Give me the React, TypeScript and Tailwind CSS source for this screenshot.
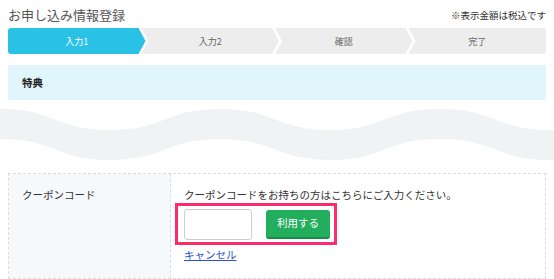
import React from "react";

const STEPS = ["入力1", "入力2", "確認", "完了"];

const clipFor = (i: number, n: number) => {
  if (i === 0) return "[clip-path:polygon(0_0,calc(100%-7px)_0,100%_50%,calc(100%-7px)_100%,0_100%)]";
  if (i === n - 1) return "[clip-path:polygon(0_0,100%_0,100%_100%,0_100%,7px_50%)]";
  return "[clip-path:polygon(0_0,calc(100%-7px)_0,100%_50%,calc(100%-7px)_100%,0_100%,7px_50%)]";
};

function StepBar() {
  return (
    <div className="flex h-[26px] w-full">
      {STEPS.map((s, i) => (
        <div
          key={s}
          className={[
            "flex flex-1 items-center justify-center text-[9px] leading-none",
            i === 0 ? "rounded-l-[3px] bg-[#29c1e6] text-white" : "ml-[-4px] bg-[#ededed] text-[#666]",
            i === STEPS.length - 1 ? "rounded-r-[3px]" : "",
            clipFor(i, STEPS.length),
          ].join(" ")}
        >
          {s}
        </div>
      ))}
    </div>
  );
}

function Wave() {
  return (
    <div className="mt-[9px] h-[52px] w-full overflow-hidden">
      <svg width="660" height="52" viewBox="0 0 660 52" className="block">
        <path
          fill="#f0f3f4"
          d="M0,0 C55,0 55,21 110,21 C165,21 165,0 220,0 C275,0 275,21 330,21 C385,21 385,0 440,0 C495,0 495,21 550,21 C605,21 605,0 660,0 L660,30 C605,30 605,51 550,51 C495,51 495,30 440,30 C385,30 385,51 330,51 C275,51 275,30 220,30 C165,30 165,51 110,51 C55,51 55,30 0,30 Z"
        />
      </svg>
    </div>
  );
}

export default function App() {
  return (
    <div className="w-[554px] bg-white font-['Noto_Sans_CJK_JP',sans-serif] text-[#333]">
      <div className="px-2">
        <div className="flex h-[28px] items-center justify-between pt-[2px]">
          <h1 className="text-[13px] leading-[18px] text-[#555]">お申し込み情報登録</h1>
          <p className="text-[9.5px] leading-[12px] text-[#333]">※表示金額は税込です</p>
        </div>
        <StepBar />
        <div className="mt-[11px] flex h-[35px] items-center bg-[#e1f5fc] px-[14px]">
          <h2 className="text-[10.5px] font-bold leading-[14px] text-[#222]">特典</h2>
        </div>
      </div>

      <Wave />

      <div className="px-2 pt-[12px]">
        <div className="flex border border-dashed border-[#dcdcdc]">
          <div className="w-[162px] shrink-0 border-r border-dashed border-[#dcdcdc] bg-[#f6f9fc] px-[13px] pt-[14px] text-[10.5px] leading-[14px]">
            クーポンコード
          </div>
          <div className="flex-1 px-[13px] pb-[16px] pt-[14px]">
            <p className="text-[10.5px] leading-[14px]">クーポンコードをお持ちの方はこちらにご入力ください。</p>
            <div className="mt-[1px] -ml-[9px] flex w-fit items-center gap-[14px] border-[3px] border-[#fd2d6c] pb-[2px] pl-[6px] pr-[4px] pt-[3px]">
              <input
                type="text"
                className="h-[31px] w-[68px] rounded-[3px] border border-[#cfcfcf] bg-white px-1 text-[11px] outline-none"
              />
              <button
                type="button"
                className="h-[29px] w-[64px] rounded-[3px] border-b-2 border-[#1a8c47] bg-[#22ae5c] text-[10.5px] leading-none text-white"
              >
                利用する
              </button>
            </div>
            <div className="leading-[14px]">
              <a href="#" className="text-[10.5px] leading-[14px] text-[#2b4fd0] underline">
                キャンセル
              </a>
            </div>
          </div>
        </div>
      </div>
    </div>
  );
}
